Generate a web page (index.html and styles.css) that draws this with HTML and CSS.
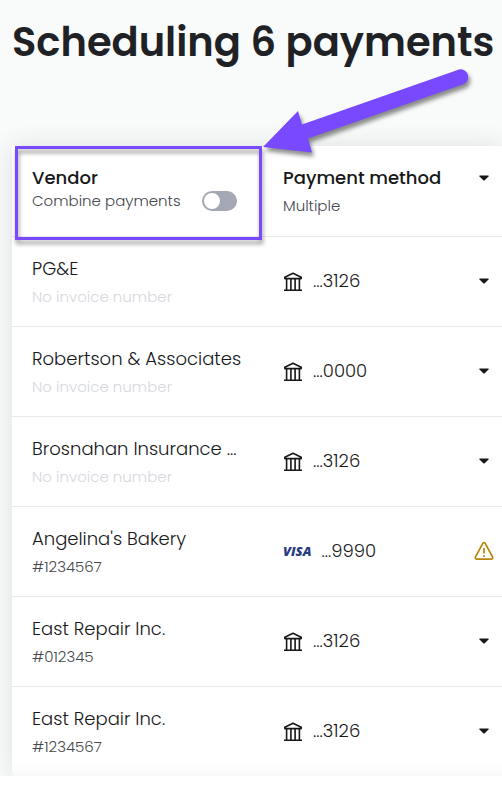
FILE: index.html
```html
<!DOCTYPE html>
<html lang="en">
<head>
<meta charset="utf-8">
<meta name="viewport" content="width=device-width, initial-scale=1">
<title>Scheduling 6 payments</title>
<link rel="stylesheet" href="styles.css">
</head>
<body>
<svg class="defs" aria-hidden="true">
  <symbol id="bank" viewBox="0 0 20 20">
    <path d="M1.8 6.6V5.2L10 1.3l8.200 3.900v1.400z M3.600 7v10.500 M7.900 7v10.500 M12.100 7v10.500 M16.400 7v10.500 M1 18.200h18" fill="none" stroke="currentColor" stroke-width="1.600" stroke-linejoin="round"/>
  </symbol>
  <symbol id="caret" viewBox="0 0 10 6">
    <path d="M.8.5h8.400q.8.200.3.900L5.700 5.200q-.7.600-1.400 0L.5 1.400Q0 .7.800.5z" fill="currentColor"/>
  </symbol>
</svg>
<main class="page">
  <h1 class="title">Scheduling 6 payments</h1>
  <div class="card">
    <table class="payments">
      <colgroup><col class="col-vendor"><col></colgroup>
      <thead>
        <tr>
          <th scope="col">
            <span class="heading">Vendor</span>
            <label class="combine">Combine payments <input class="switch" type="checkbox" role="switch"></label>
          </th>
          <th scope="col">
            <div class="head-line"><span class="heading">Payment method</span><button class="menu" type="button" aria-label="Choose payment method for all"><svg class="caret"><use href="#caret"/></svg></button></div>
            <span class="summary">Multiple</span>
          </th>
        </tr>
      </thead>
      <tbody>
        <tr>
          <td><div class="name">PG&amp;E</div><div class="invoice missing">No invoice number</div></td>
          <td><div class="method"><svg class="bank"><use href="#bank"/></svg><span>...3126</span><button class="menu" type="button" aria-label="Change method"><svg class="caret"><use href="#caret"/></svg></button></div></td>
        </tr>
        <tr>
          <td><div class="name">Robertson &amp; Associates</div><div class="invoice missing">No invoice number</div></td>
          <td><div class="method"><svg class="bank"><use href="#bank"/></svg><span>...0000</span><button class="menu" type="button" aria-label="Change method"><svg class="caret"><use href="#caret"/></svg></button></div></td>
        </tr>
        <tr>
          <td><div class="name">Brosnahan Insurance ...</div><div class="invoice missing">No invoice number</div></td>
          <td><div class="method"><svg class="bank"><use href="#bank"/></svg><span>...3126</span><button class="menu" type="button" aria-label="Change method"><svg class="caret"><use href="#caret"/></svg></button></div></td>
        </tr>
        <tr>
          <td><div class="name">Angelina's Bakery</div><div class="invoice">#1234567</div></td>
          <td><div class="method"><span class="visa">VISA</span><span>...9990</span>
            <svg class="warning" viewBox="0 0 20 20" role="img" aria-label="Warning"><path d="M8.800 2.300 1.500 15.800Q.8 18 2.900 18.200H17.100Q19.200 18 18.500 15.800L11.200 2.300Q10 .9 8.800 2.300z M10 7v5.500 M10 14.200v1.800" fill="none" stroke="currentColor" stroke-width="1.700" stroke-linejoin="round"/></svg></div></td>
        </tr>
        <tr>
          <td><div class="name">East Repair Inc.</div><div class="invoice">#012345</div></td>
          <td><div class="method"><svg class="bank"><use href="#bank"/></svg><span>...3126</span><button class="menu" type="button" aria-label="Change method"><svg class="caret"><use href="#caret"/></svg></button></div></td>
        </tr>
        <tr>
          <td><div class="name">East Repair Inc.</div><div class="invoice">#1234567</div></td>
          <td><div class="method"><svg class="bank"><use href="#bank"/></svg><span>...3126</span><button class="menu" type="button" aria-label="Change method"><svg class="caret"><use href="#caret"/></svg></button></div></td>
        </tr>
      </tbody>
    </table>
    <div class="highlight"></div>
    <svg class="arrow" viewBox="0 0 210 90" aria-hidden="true"><path d="M1 79 36 43 40 56.500 197 1.400A7.800 7.800 0 0 1 202 16L46 70.500 50 84.500z" fill="#7849ff"/></svg>
  </div>
</main>
</body>
</html>
```
FILE: styles.css
```css
* { box-sizing: border-box; }
body {
  margin: 0;
  background: #fff;
  color: #17181a;
  font-family: Poppins, Inter, "Open Sans", sans-serif;
  font-size: 18px;
  font-weight: 300;
}
.defs { position: absolute; width: 0; height: 0; }
.page {
  padding-left: 12px;
  background: #f9fafa;
  overflow: hidden;
}
.title {
  margin: 0;
  padding-top: 12px;
  height: 146px;
  color: #202124;
  font-size: 40px;
  line-height: 60px;
  font-weight: 600;
  white-space: nowrap;
}
.card {
  position: relative;
  background: linear-gradient(to top, #f9f9f9, #fff 14px);
  border-bottom-left-radius: 4px;
  box-shadow: 0 0 24px rgba(32, 33, 36, .12);
}
.payments {
  width: 100%;
  table-layout: fixed;
  border-collapse: collapse;
}
.col-vendor { width: 251px; }
th, td {
  height: 90px;
  padding: 18px 8px 0 20px;
  text-align: left;
  vertical-align: top;
  font-weight: 300;
  white-space: nowrap;
}
tbody tr { border-top: 1px solid #e8e9ea; }
.heading {
  display: block;
  font-weight: 500;
  line-height: 28px;
}
.combine {
  display: flex;
  align-items: center;
  justify-content: space-between;
  height: 18px;
  padding-right: 18px;
  color: #44474e;
  font-size: 15px;
  line-height: 18px;
}
.switch {
  appearance: none;
  display: flex;
  width: 35px;
  height: 20px;
  margin: 0;
  padding: 2px;
  align-items: center;
  border-radius: 10px;
  background: #a4a7b4;
}
.switch::before {
  content: "";
  width: 16px;
  height: 16px;
  border-radius: 50%;
  background: #fff;
}
.switch:checked { justify-content: flex-end; background: #7849ff; }
.head-line { display: flex; align-items: center; }
.summary, .invoice {
  display: block;
  color: #44474e;
  font-size: 15px;
  line-height: 28px;
}
.name { line-height: 28px; }
.invoice.missing { color: #d6d7dd; }
.method {
  display: flex;
  align-items: center;
  gap: 10px;
  height: 52px;
}
.bank { width: 20px; height: 20px; margin-top: 2px; }
.visa {
  color: #263b80;
  font: italic 800 13px "Open Sans", sans-serif;
}
.menu {
  display: flex;
  width: 20px;
  height: 20px;
  margin-left: auto;
  padding: 0;
  align-items: center;
  justify-content: center;
  border: 0;
  background: none;
  color: inherit;
}
.caret { width: 10px; height: 6px; }
.warning {
  width: 20px;
  height: 20px;
  margin-left: auto;
  color: #b8860b;
}
.highlight {
  position: absolute;
  left: 3px;
  top: 0;
  width: 247px;
  height: 94px;
  border: 3px solid #7849ff;
  filter: drop-shadow(1px 4px 2px rgba(0, 0, 0, .4));
  pointer-events: none;
}
.arrow {
  position: absolute;
  left: 250px;
  top: -78px;
  width: 210px;
  height: 90px;
  overflow: visible;
  filter: drop-shadow(2px 4px 2px rgba(0, 0, 0, .45));
  pointer-events: none;
}
```
